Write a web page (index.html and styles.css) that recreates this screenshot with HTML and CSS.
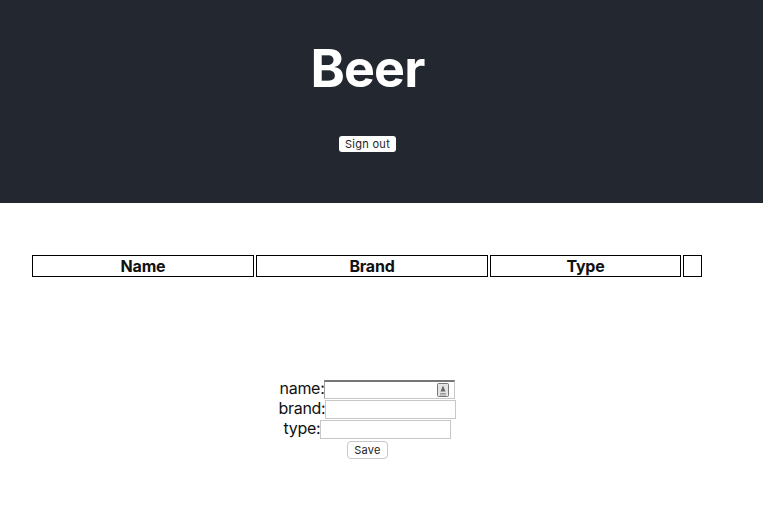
FILE: index.html
```html
<!DOCTYPE html>
<html lang="en">
<head>
    <meta charset="UTF-8">
    <meta name="viewport" content="width=device-width, initial-scale=1.0">
    <title>Beer</title>
    <link rel="stylesheet" href="styles.css">
</head>
<body>
    <header class="app-header">
        <h1>Beer</h1>
        <button class="btn-signout">Sign out</button>
    </header>
    <table class="beer-table">
        <thead>
            <tr>
                <th class="col-name">Name</th>
                <th class="col-brand">Brand</th>
                <th class="col-type">Type</th>
                <th class="col-action"></th>
            </tr>
        </thead>
    </table>
    <form class="beer-form">
        <div class="form-row">
            <label for="name">name:</label><span class="input-wrap"><input type="text" id="name" class="input-first"><svg class="contact-icon" width="12" height="14" viewBox="0 0 12 14"><rect x="0.5" y="0.5" width="11" height="13" rx="1" fill="#e4e4e4" stroke="#777"/><path d="M6 2.5 L8.5 8.5 H3.5 Z" fill="#666"/><path d="M3 10.5 H9 M3 12 H9" stroke="#999"/></svg></span>
        </div>
        <div class="form-row">
            <label for="brand">brand:</label><input type="text" id="brand">
        </div>
        <div class="form-row">
            <label for="type">type:</label><input type="text" id="type">
        </div>
        <div class="form-row">
            <button type="button" class="btn-save">Save</button>
        </div>
    </form>
</body>
</html>
```

FILE: styles.css
```css
body {
    margin: 0;
    font-family: Inter, "Liberation Sans", sans-serif;
    color: #111;
    background: #fff;
}
.app-header {
    height: 203px;
    background: #232830;
    display: flex;
    flex-direction: column;
    align-items: center;
    box-sizing: border-box;
    padding: 40px 28px 0 0;
}
.app-header h1 {
    margin: 0;
    color: #fff;
    font-size: 52px;
    line-height: 58px;
    font-weight: 700;
    letter-spacing: -0.9px;
}
.btn-signout {
    margin-top: 38px;
    width: 57px;
    height: 16px;
    padding: 0;
    border: none;
    border-radius: 3px;
    background: #fff;
    color: #222;
    font-family: inherit;
    font-size: 11px;
    letter-spacing: 0.3px;
}
.beer-table {
    margin: 50px 0 0 30px;
    width: 674px;
    table-layout: fixed;
    border-spacing: 2px;
    border-collapse: separate;
}
.beer-table th {
    height: 20px;
    padding: 0;
    border: 1px solid #000;
    font-size: 16px;
    line-height: 20px;
    font-weight: 700;
    letter-spacing: -0.2px;
    box-sizing: content-box;
}
.col-name { width: 220px; }
.col-brand { width: 230px; }
.col-type { width: 189px; }
.col-action { width: 17px; }
.beer-form {
    margin-top: 101px;
    padding-right: 28px;
}
.form-row {
    display: flex;
    justify-content: center;
    align-items: flex-start;
    height: 20px;
    font-size: 16px;
}
.form-row label {
    line-height: 16px;
    letter-spacing: -0.3px;
}
.form-row input {
    box-sizing: border-box;
    width: 131px;
    height: 19px;
    margin: 0;
    padding: 0 2px;
    border: 1px solid #c8c8c8;
    background: #fff;
}
.form-row .input-first {
    border-top: 2px solid #767676;
    border-left-color: #a0a0a0;
    display: block;
}
.input-wrap {
    position: relative;
    display: block;
}
.contact-icon {
    position: absolute;
    top: 3px;
    right: 6px;
}
.btn-save {
    margin-top: 1px;
    width: 41px;
    height: 18px;
    padding: 0;
    border: 1px solid #c8c8c8;
    border-radius: 4px;
    background: #fff;
    color: #222;
    font-family: inherit;
    font-size: 11px;
    letter-spacing: 0.3px;
}
```
